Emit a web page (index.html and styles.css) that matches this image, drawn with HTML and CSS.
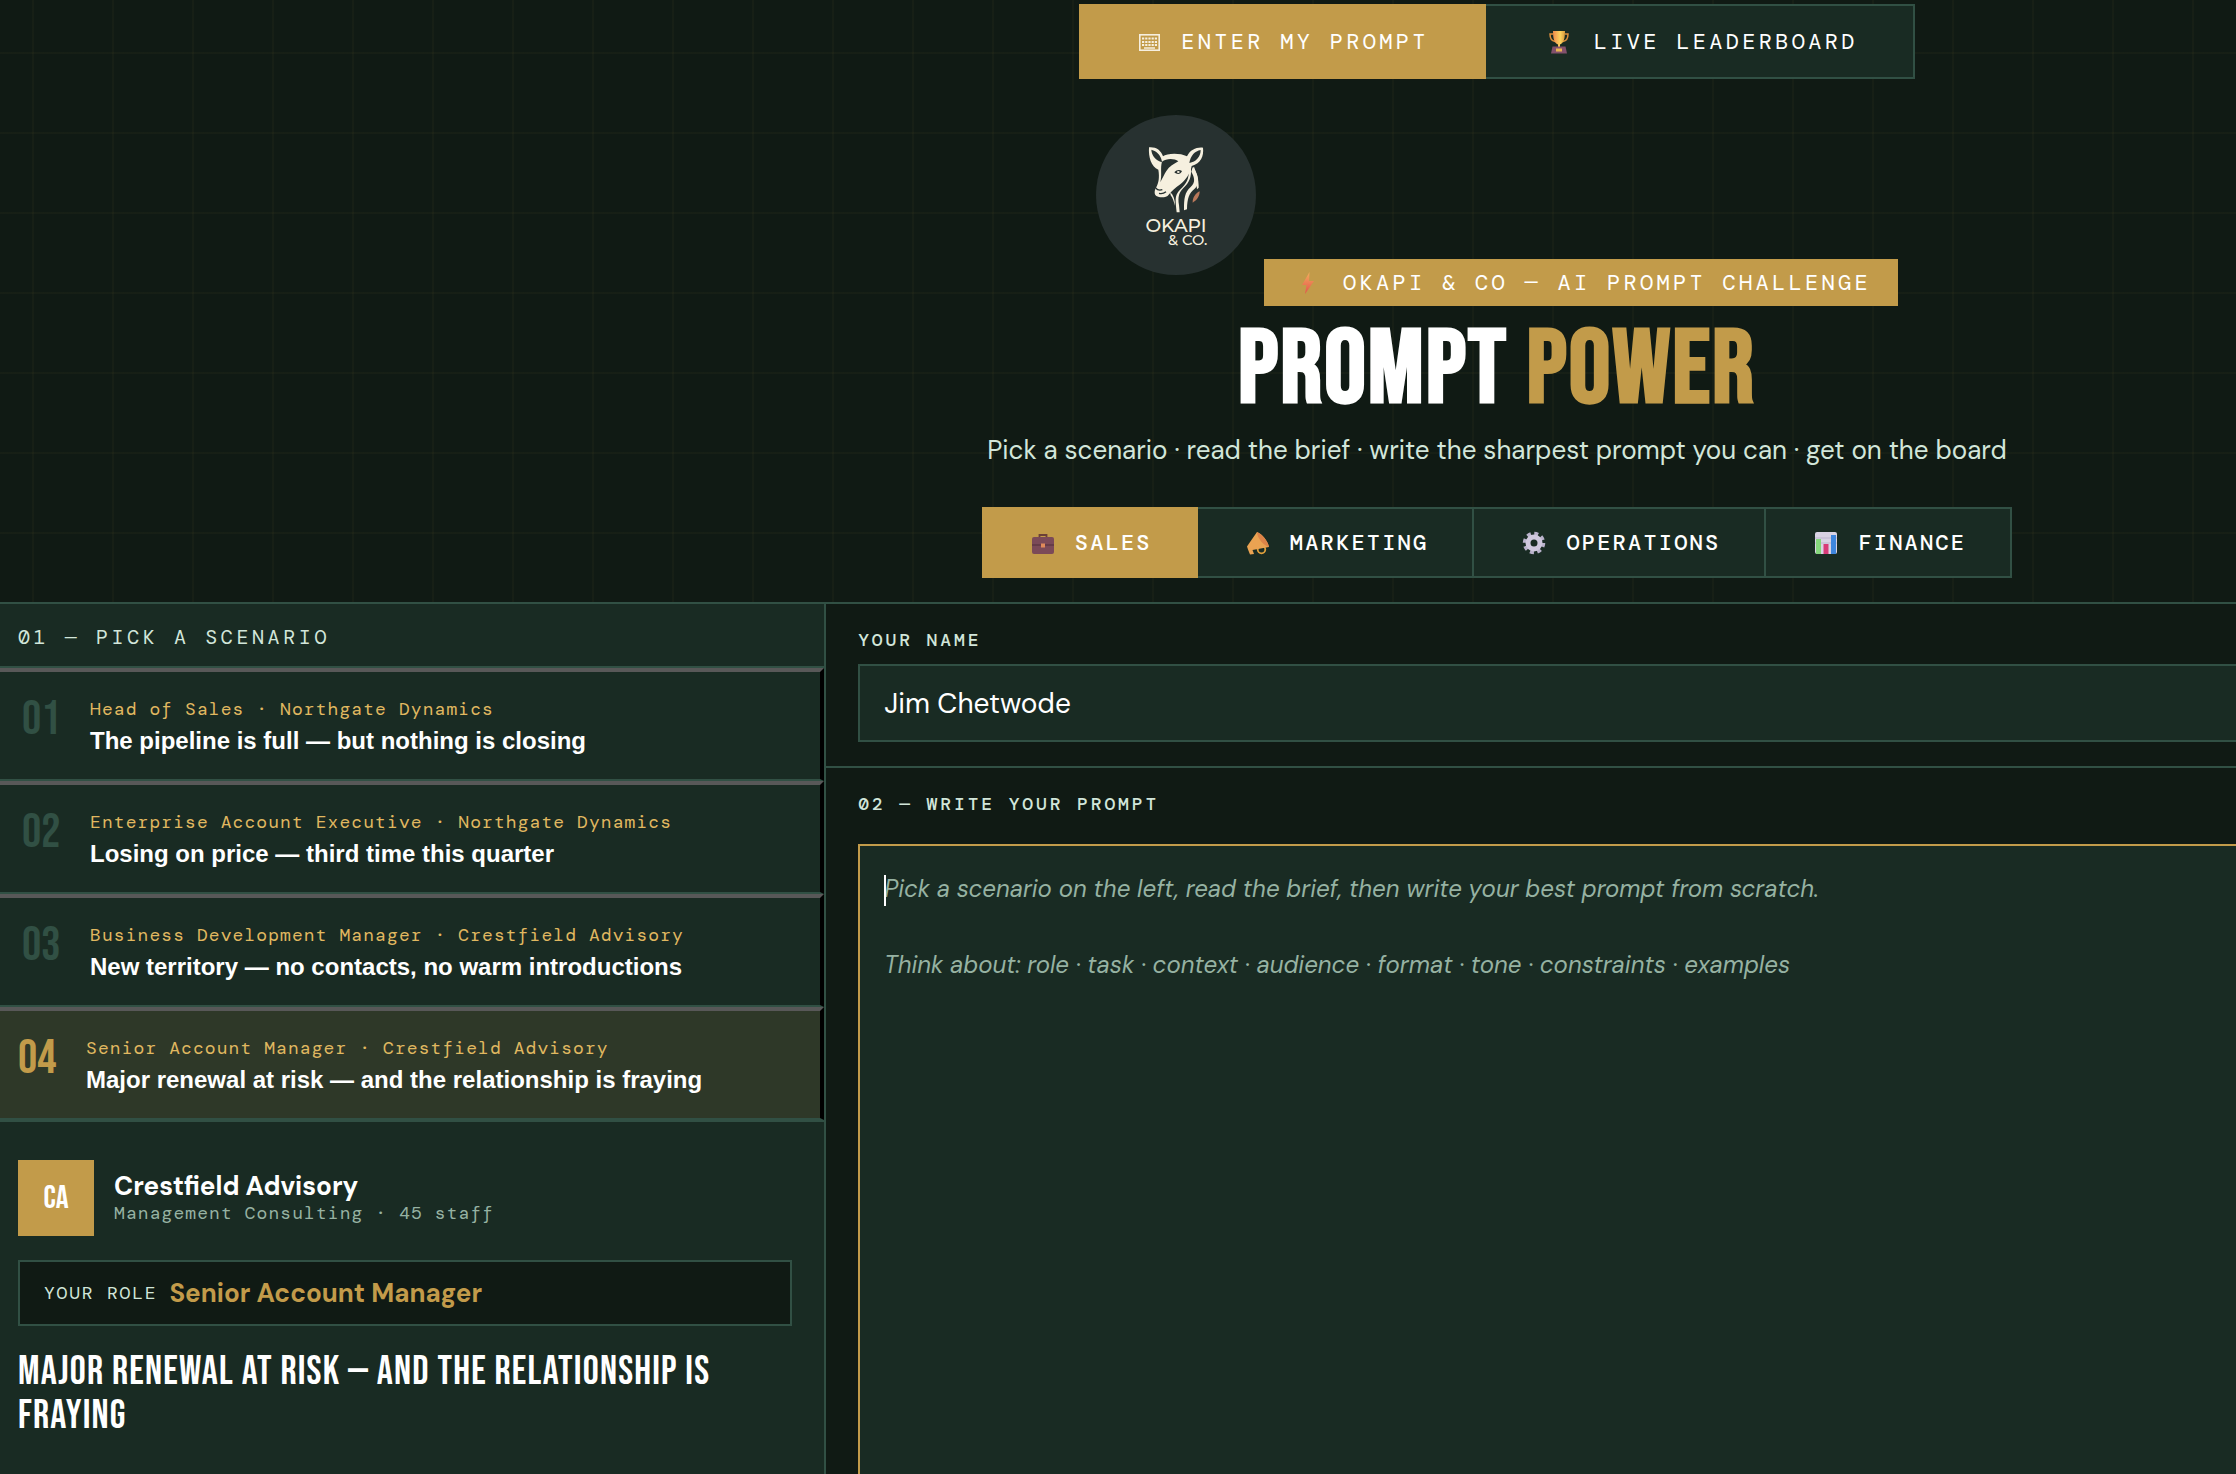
FILE: index.html
```
<!DOCTYPE html>
<html lang="en">
<head>
    <meta charset="UTF-8">
    <meta name="viewport" content="width=device-width, initial-scale=1.0">
    <title>Prompt Power</title>
    <link rel="stylesheet" href="styles.css">
</head>
<body>
    <header class="header">
        <!-- View switch -->
        <nav class="tabs view-tabs">
            <button class="tab active" type="button">
                <svg class="icon" viewBox="0 0 28 28"><rect x="4.800" y="6.800" width="19.400" height="15.400" fill="none" stroke="#f6efe0" stroke-width="1.600"/><path d="M7 10.500h15M7 14h15M7 17h15" stroke="#f6efe0" stroke-width="2" stroke-dasharray="2.200 1"/><path d="M9 20h11" stroke="#f6efe0" stroke-width="1.500"/></svg>
                ENTER MY PROMPT
            </button>
            <button class="tab" type="button">
                <svg class="icon wide" viewBox="0 0 28 28"><defs><linearGradient id="cup" x1="0" x2="1"><stop offset="0" stop-color="#f08a4b"/><stop offset=".6" stop-color="#fbd35e"/><stop offset="1" stop-color="#d99a3c"/></linearGradient></defs><path d="M8 6H5c0 5 2 7 5 7.500M20 6h3c0 5-2 7-5 7.500" fill="none" stroke="#d98d3c" stroke-width="1.500"/><path d="M8 3h12c0 7-1 12-5 13.500V19h-2v-2.500C9 15 8 10 8 3z" fill="url(#cup)"/><path d="M7.500 18.500h13l1.500 7H6z" fill="#82506b"/><rect x="11" y="20.500" width="6" height="3" fill="#e9b552"/></svg>
                LIVE LEADERBOARD
            </button>
        </nav>

        <div class="brand">
            <svg class="brand-logo" viewBox="18 15 480 480" role="img" aria-label="Okapi &amp; Co.">
                <circle cx="258" cy="255" r="240" fill="#273130"/>
                <!-- Head and neck -->
                <g fill="#f6f0df">
                    <path d="M177 112c20-2 36 8 42 27 11-9 50-11 72 0 10-20 28-28 48-26 3 25-6 46-34 55-4 22-18 43-36 56-13 9-24 19-33 30-6 9-26 10-37 4-7-5-6-17-1-25 8-14 11-31 7-54-22-9-30-38-28-67z"/>
                    <path d="M303 174c2 26-5 44-22 59-14 13-18 28-14 52l2 22h-9c-3-34-8-50 10-68 20-18 28-35 26-60z"/>
                    <path d="M309 170c17 26 22 50 5 66-17 14-22 27-23 62l-9 3c0-37 2-53 20-70 15-14 12-28 2-46z"/>
                    <path d="M312 170c8 22 15 41 14 63l-5 5c-2-27-7-43-15-60z"/>
                    <path d="M240 246c10 8 15 22 15 41-4-12-6-22-13-31z"/>
                </g>
                <g fill="#273130">
                    <path d="M184 119c16 4 30 18 32 38-18-6-31-19-32-38z"/>
                    <path d="M332 120c-17 3-31 17-34 39 20-4 34-18 34-39z"/>
                    <path d="M216 155c13-10 37-10 49-1-13 8-27 15-36 29-6 10-12 22-18 34 6-25-1-41 5-62z"/>
                    <path d="M253 187c7-8 15-9 23-4-4 10-14 12-23 4z"/>
                </g>
                <ellipse cx="265" cy="186" rx="4" ry="3" fill="#f6f0df"/>
                <path d="M197 234c5 6 11 8 20 5m-10 11c8 2 15 0 21-5" fill="none" stroke="#273130" stroke-width="4"/>
                <path d="M308 278c-1-14 8-28 21-34 0 14-8 27-21 34z" fill="#b9785a"/>
                <text class="logo-word"><tspan x="350" y="365" font-size="56">OKAPI</tspan><tspan x="352" y="406" font-size="44">&amp; CO.</tspan></text>
            </svg>
            <div class="badge">
                <svg class="icon" viewBox="0 0 28 28"><defs><linearGradient id="bolt" x2="0" y2="1"><stop offset="0" stop-color="#f3ae5c"/><stop offset="1" stop-color="#e3524c"/></linearGradient></defs><path d="M15.500 3L8 16h4.500L11 25l9-13h-5z" fill="url(#bolt)"/></svg>
                OKAPI &amp; CO — AI PROMPT CHALLENGE
            </div>
        </div>

        <h1 class="title">PROMPT <span>POWER</span></h1>
        <p class="subtitle">Pick a scenario · read the brief · write the sharpest prompt you can · get on the board</p>

        <!-- Departments -->
        <nav class="tabs dept-tabs">
            <button class="tab active" type="button">
                <svg class="icon" viewBox="0 0 28 28"><path d="M10.500 9V6h7v3" fill="none" stroke="#6b4038" stroke-width="1.800"/><rect x="3" y="8" width="22" height="17" rx="2" fill="#7b4a58"/><path d="M3 16h22" stroke="#5f3844" stroke-width="1.500"/><rect x="12" y="14.500" width="4" height="4" fill="#e08a5a"/></svg>
                SALES
            </button>
            <button class="tab" type="button">
                <svg class="icon" viewBox="0 0 28 28"><circle cx="17.500" cy="20.500" r="3.800" fill="none" stroke="#e0a03c" stroke-width="1.800"/><path d="M13 3c5 2 11 9 12 15L8.500 21l1.500 4-4 .500-2-5-1-3 2-3z" fill="#eaa352"/><path d="M13 3c5 2 11 9 12 15-5-1-12-9-12-15z" fill="#dd8448"/></svg>
                MARKETING
            </button>
            <button class="tab" type="button">
                <svg class="icon" viewBox="0 0 28 28"><circle cx="14" cy="14" r="9.500" fill="none" stroke="#b9b2cb" stroke-width="3.500" stroke-dasharray="4 3.460"/><circle cx="14" cy="14" r="6" fill="none" stroke="#cfc8dd" stroke-width="5"/></svg>
                OPERATIONS
            </button>
            <button class="tab" type="button">
                <svg class="icon" viewBox="0 0 28 28"><rect x="3" y="3" width="22" height="22" rx="2" fill="#d9d3e4"/><path d="M3 9h22M3 14h22" stroke="#bdb5cf"/><path d="M4 10h5v15H4z" fill="#85d67c"/><path d="M11.500 15h5v10h-5z" fill="#d83a78"/><path d="M19 6h5v19h-5z" fill="#3f86dd"/></svg>
                FINANCE
            </button>
        </nav>
    </header>

    <main class="layout">
        <section class="sidebar">
            <h2 class="panel-heading">01 — PICK A SCENARIO</h2>

            <button class="scenario" type="button">
                <span class="num">01</span>
                <span class="scenario-text">
                    <span class="scenario-role">Head of Sales · Northgate Dynamics</span>
                    <span class="scenario-title">The pipeline is full — but nothing is closing</span>
                </span>
            </button>
            <button class="scenario" type="button">
                <span class="num">02</span>
                <span class="scenario-text">
                    <span class="scenario-role">Enterprise Account Executive · Northgate Dynamics</span>
                    <span class="scenario-title">Losing on price — third time this quarter</span>
                </span>
            </button>
            <button class="scenario" type="button">
                <span class="num">03</span>
                <span class="scenario-text">
                    <span class="scenario-role">Business Development Manager · Crestfield Advisory</span>
                    <span class="scenario-title">New territory — no contacts, no warm introductions</span>
                </span>
            </button>
            <button class="scenario selected" type="button">
                <span class="num">04</span>
                <span class="scenario-text">
                    <span class="scenario-role">Senior Account Manager · Crestfield Advisory</span>
                    <span class="scenario-title">Major renewal at risk — and the relationship is fraying</span>
                </span>
            </button>

            <!-- Brief of the selected scenario -->
            <article class="brief">
                <div class="company">
                    <div class="company-logo">CA</div>
                    <div>
                        <div class="company-name">Crestfield Advisory</div>
                        <div class="company-meta">Management Consulting · 45 staff</div>
                    </div>
                </div>
                <div class="role-box">
                    <span class="role-label">YOUR ROLE</span>
                    <span class="role-value">Senior Account Manager</span>
                </div>
                <h3 class="brief-title">MAJOR RENEWAL AT RISK — AND THE RELATIONSHIP IS FRAYING</h3>
            </article>
        </section>

        <section class="workspace">
            <div class="name-section">
                <label class="field-label" for="playerName">YOUR NAME</label>
                <input class="name-input" id="playerName" type="text" value="Jim Chetwode">
            </div>
            <div class="prompt-section">
                <label class="field-label" for="promptText">02 — WRITE YOUR PROMPT</label>
                <div class="prompt-wrap">
                    <textarea class="prompt-input" id="promptText" placeholder="Pick a scenario on the left, read the brief, then write your best prompt from scratch.&#10;&#10;Think about: role · task · context · audience · format · tone · constraints · examples"></textarea>
                    <span class="caret"></span>
                </div>
            </div>
        </section>
    </main>
</body>
</html>
```
FILE: styles.css
```
:root {
    --bg: #101a14;
    --panel: #192b23;
    --line: #315044;
    --gold: #c29b4a;
    --gold-light: #e0b860;
    --pale: #d2e6da;
    --muted: #96b2a2;
    --mono: "DM Mono", "Liberation Mono", monospace;
    --sans: "DM Sans", Inter, sans-serif;
    --display: "Bebas Neue", "Open Sans Condensed", "Roboto Condensed", sans-serif;
}

* {
    box-sizing: border-box;
    margin: 0;
    padding: 0;
}

body {
    height: 100vh;
    display: flex;
    flex-direction: column;
    overflow: hidden;
    background: var(--bg);
    color: #fff;
    font-family: var(--sans);
}

/* Header */
.header {
    display: flex;
    flex-direction: column;
    align-items: center;
    flex-shrink: 0;
    padding: 4px 0 24px 33.9%;
    border-bottom: 2px solid var(--line);
    background-image:
        linear-gradient(rgba(194, 155, 74, 0.04) 2px, transparent 2px),
        linear-gradient(90deg, rgba(194, 155, 74, 0.04) 2px, transparent 2px);
    background-size: 80px 80px;
    background-position: 32px 52px;
}

.tabs {
    display: flex;
}

.tab {
    display: flex;
    align-items: center;
    gap: 18px;
    border: 2px solid var(--line);
    border-left-width: 0;
    background: var(--panel);
    color: #fff;
    font-family: var(--mono);
    font-size: 22px;
    white-space: nowrap;
    cursor: pointer;
}

.tab.active {
    background: var(--gold);
    border-color: var(--gold);
}

.view-tabs .tab {
    height: 75px;
    padding: 0 55px 0 56px;
    letter-spacing: 0.15em;
}

.dept-tabs .tab {
    height: 71px;
    padding: 0 44px 0 46px;
    font-weight: 500;
    letter-spacing: 0.1em;
}

.dept-tabs .tab.active {
    padding-left: 47px;
}

.icon {
    width: 28px;
    height: 28px;
    flex-shrink: 0;
}

.icon.wide {
    width: 34px;
}

.brand {
    display: flex;
    align-items: flex-end;
    gap: 8px;
    margin-top: 36px;
}

.brand-logo {
    width: 160px;
    height: 160px;
    margin-bottom: 31px;
}

.logo-word {
    fill: #f6f0df;
    font-family: Montserrat, Lato, sans-serif;
    font-weight: 500;
    text-anchor: end;
}

.badge {
    display: flex;
    align-items: center;
    gap: 21px;
    height: 47px;
    padding: 0 27px 0 30px;
    background: var(--gold);
    font-family: var(--mono);
    font-size: 22px;
    letter-spacing: 0.15em;
    white-space: nowrap;
}

.title {
    margin-top: 15px;
    font-family: var(--display);
    font-size: 104px;
    font-weight: bold;
    letter-spacing: 2px;
    line-height: 100px;
}

.title span {
    color: var(--gold);
}

.subtitle {
    margin: 9px 0 37px;
    color: var(--pale);
    font-size: 26px;
    line-height: 40px;
}

/* Columns */
.layout {
    flex: 1;
    min-height: 0;
    display: grid;
    grid-template-columns: 36.95% 1fr;
}

.sidebar {
    background: var(--panel);
    border-right: 2px solid var(--line);
}

.panel-heading {
    padding: 21px 18px 17px;
    border-bottom: 2px solid var(--line);
    color: var(--pale);
    font-family: var(--mono);
    font-size: 20px;
    font-weight: normal;
    letter-spacing: 0.18em;
    line-height: 24px;
}

/* Scenario list */
.scenario {
    display: flex;
    gap: 20px;
    width: 100%;
    padding: 25px 18px 23px 22px;
    border-style: solid;
    border-width: 4px 4px 2px 0;
    border-color: #585858 #000 var(--line);
    background: var(--panel);
    text-align: left;
    cursor: pointer;
}

.scenario.selected {
    padding-left: 18px;
    background: #2e3828;
}

.num {
    width: 48px;
    color: var(--line);
    font-family: var(--display);
    font-size: 48px;
    line-height: 46px;
}

.selected .num {
    color: var(--gold);
}

.scenario-text {
    display: flex;
    flex-direction: column;
    gap: 5px;
}

.scenario-role {
    color: var(--gold-light);
    font-family: var(--mono);
    font-size: 18px;
    letter-spacing: 0.06em;
    line-height: 24px;
}

.scenario-title {
    color: #fff;
    font-family: Arial, "Liberation Sans", sans-serif;
    font-size: 24px;
    font-weight: bold;
    line-height: 30px;
}

/* Brief */
.brief {
    padding: 38px 32px 36px 18px;
    border-top: 2px solid var(--line);
}

.company {
    display: flex;
    align-items: center;
    gap: 20px;
}

.company-logo {
    display: flex;
    align-items: center;
    justify-content: center;
    width: 76px;
    height: 76px;
    background: var(--gold);
    font-family: var(--display);
    font-size: 32px;
}

.company-name {
    font-size: 26px;
    font-weight: 700;
    line-height: 30px;
}

.company-meta {
    color: var(--muted);
    font-family: var(--mono);
    font-size: 18px;
    letter-spacing: 0.06em;
    line-height: 24px;
}

.role-box {
    display: flex;
    align-items: center;
    gap: 12px;
    height: 66px;
    margin: 24px 0;
    padding: 0 24px;
    border: 2px solid var(--line);
    background: var(--bg);
}

.role-label {
    color: var(--pale);
    font-family: var(--mono);
    font-size: 18px;
    letter-spacing: 0.1em;
}

.role-value {
    color: var(--gold);
    font-size: 26px;
    font-weight: 700;
}

.brief-title {
    font-family: var(--display);
    font-size: 40px;
    font-weight: normal;
    letter-spacing: 0.03em;
    line-height: 44px;
}

/* Workspace */
.workspace {
    display: flex;
    flex-direction: column;
    min-height: 0;
}

.field-label {
    display: block;
    color: var(--pale);
    font-family: var(--mono);
    font-size: 18px;
    font-weight: 500;
    letter-spacing: 0.16em;
    line-height: 24px;
}

.name-section {
    padding: 24px 0 24px 32px;
    border-bottom: 2px solid var(--line);
}

.name-input {
    display: block;
    width: 100%;
    height: 78px;
    margin-top: 12px;
    padding: 0 24px;
    border: 2px solid var(--line);
    border-right: 0;
    background: var(--panel);
    color: #fff;
    font-family: var(--sans);
    font-size: 28px;
    outline: none;
}

.prompt-section {
    display: flex;
    flex-direction: column;
    flex: 1;
    padding: 24px 0 0 32px;
}

.prompt-wrap {
    position: relative;
    flex: 1;
    display: flex;
    margin-top: 28px;
}

.prompt-input {
    flex: 1;
    padding: 24px;
    border: 2px solid var(--gold);
    border-width: 2px 0 0 2px;
    background: var(--panel);
    color: #fff;
    font-family: var(--sans);
    font-size: 24px;
    line-height: 38px;
    resize: none;
    outline: none;
}

.prompt-input::placeholder {
    color: var(--muted);
    font-style: italic;
    opacity: 1;
}

.caret {
    position: absolute;
    top: 31px;
    left: 26px;
    width: 2px;
    height: 31px;
    background: #fff;
}
```
